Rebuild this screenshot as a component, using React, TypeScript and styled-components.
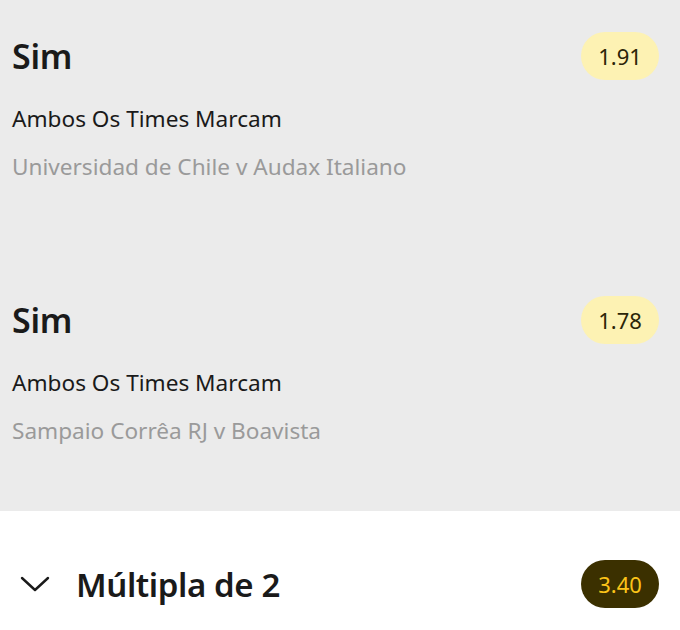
import React from 'react';
import styled, { createGlobalStyle } from 'styled-components';

const GlobalStyle = createGlobalStyle`
  html, body {
    margin: 0;
    padding: 0;
    background: #ffffff;
    font-family: "Noto Sans", "Open Sans", Arial, sans-serif;
  }
`;

const Page = styled.div`
  width: 680px;
  height: 630px;
  overflow: hidden;
  background: #ffffff;
`;

const SelectionsPanel = styled.div`
  background: #ebebeb;
  height: 511px;
  padding: 0 21px 0 12px;
  box-sizing: border-box;
`;

const Selection = styled.div`
  padding-top: 32px;
  height: 264px;
  box-sizing: border-box;
`;

const HeaderRow = styled.div`
  display: flex;
  align-items: center;
  justify-content: space-between;
  height: 48px;
`;

const SelectionName = styled.div`
  font-size: 34px;
  font-weight: 600;
  color: #1a1a1a;
  letter-spacing: -0.3px;
`;

const OddsPill = styled.div<{ $dark?: boolean }>`
  display: flex;
  align-items: center;
  justify-content: center;
  width: 78px;
  height: 48px;
  border-radius: 24px;
  font-size: 22px;
  background: ${(p) => (p.$dark ? '#3b3000' : '#fdf2b3')};
  color: ${(p) => (p.$dark ? '#fcc419' : '#2b2508')};
`;

const Market = styled.div`
  margin-top: 24px;
  font-size: 22.6px;
  color: #1a1a1a;
  line-height: 30px;
`;

const Fixture = styled.div`
  margin-top: 18px;
  font-size: 22.6px;
  color: #9a9a9a;
  line-height: 30px;
`;

const BetRow = styled.div`
  display: flex;
  align-items: center;
  height: 48px;
  margin-top: 49px;
  padding: 0 21px 0 20px;
`;

const Chevron = styled.svg`
  width: 30px;
  height: 18px;
  margin-right: 26px;
`;

const BetTitle = styled.div`
  flex: 1;
  font-size: 33px;
  font-weight: 600;
  color: #1a1a1a;
  letter-spacing: -0.4px;
`;

const selections = [
  { name: 'Sim', odds: '1.91', market: 'Ambos Os Times Marcam', fixture: 'Universidad de Chile v Audax Italiano' },
  { name: 'Sim', odds: '1.78', market: 'Ambos Os Times Marcam', fixture: 'Sampaio Corrêa RJ v Boavista' },
];

const App: React.FC = () => {
  return (
    <Page>
      <GlobalStyle />
      <SelectionsPanel>
        {selections.map((s, i) => (
          <Selection key={i}>
            <HeaderRow>
              <SelectionName>{s.name}</SelectionName>
              <OddsPill>{s.odds}</OddsPill>
            </HeaderRow>
            <Market>{s.market}</Market>
            <Fixture>{s.fixture}</Fixture>
          </Selection>
        ))}
      </SelectionsPanel>
      <BetRow>
        <Chevron viewBox="0 0 30 18">
          <path d="M2 3 L15 15 L28 3" fill="none" stroke="#1a1a1a" strokeWidth="2.4" strokeLinecap="round" strokeLinejoin="round" />
        </Chevron>
        <BetTitle>Múltipla de 2</BetTitle>
        <OddsPill $dark>3.40</OddsPill>
      </BetRow>
    </Page>
  );
};

export default App;
